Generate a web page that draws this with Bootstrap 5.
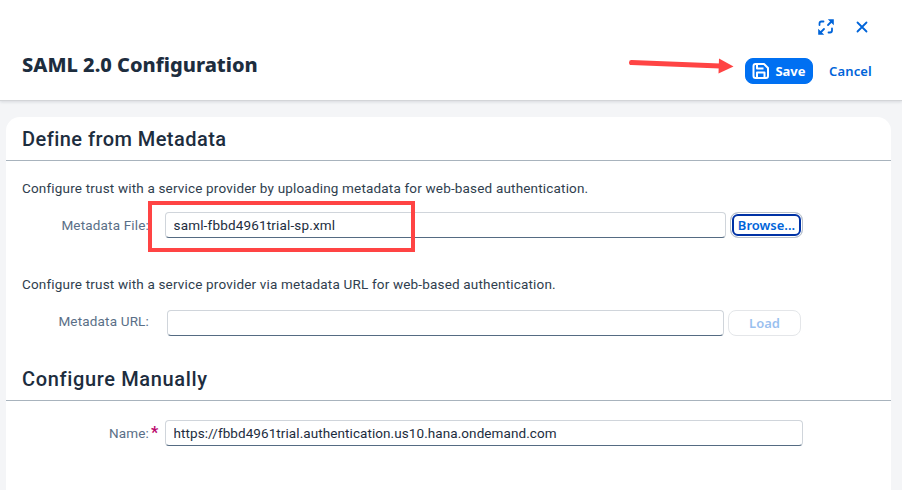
<!DOCTYPE html>
<html lang="en">
<head>
<meta charset="utf-8">
<meta name="viewport" content="width=device-width, initial-scale=1">
<title>SAML 2.0 Configuration</title>
<link href="https://cdn.jsdelivr.net/npm/bootstrap@5.3.0/dist/css/bootstrap.min.css" rel="stylesheet">
<style>
body{background:#f4f5f7;color:#1d2d3e;font-family:Roboto,"Noto Sans",sans-serif;font-size:13.5px;line-height:20px;height:490px}
.page-head{height:101px;border-bottom:1px solid #d3d5d8;box-shadow:0 1px 3px rgba(34,53,72,.14);padding:13px 14px 0 22px}
.head-icons{height:28px;gap:21px;padding-right:20px}
.page-title{font-family:"Noto Sans",sans-serif;font-size:20px;line-height:26px;font-weight:800}
.head-row{height:28px;margin-top:16px}
.btn-ui{--bs-btn-padding-x:0;--bs-btn-padding-y:0;--bs-btn-font-family:"Noto Sans",sans-serif;--bs-btn-font-size:13px;--bs-btn-font-weight:600;--bs-btn-border-radius:8px;--bs-btn-line-height:24px;--bs-btn-disabled-opacity:.4;height:26px}
.btn-save{--bs-btn-bg:#0070f2;--bs-btn-border-color:#0070f2;--bs-btn-font-weight:700;width:68px;gap:5px}
.btn-cancel{--bs-btn-color:#0064d9;width:75px;letter-spacing:.15px}
.btn-browse{--bs-btn-color:#0064d9;--bs-btn-border-color:#bcc3ca;width:73px;box-shadow:inset 0 0 0 1px #fff,inset 0 0 0 3px #0032a5}
.btn-load{--bs-btn-disabled-color:#0064d9;--bs-btn-disabled-border-color:#bcc3ca;width:73px}
.panel{margin:16px 11px 0 6px;height:373px;border-radius:14px 14px 0 0}
.sec-title{height:44px;padding:0 16px;font-size:20px;line-height:44px;font-weight:500;letter-spacing:.45px;border-bottom:1px solid #a8b3bd}
.intro{padding-left:16px;height:20px;color:#2f3e4e;letter-spacing:.178px}
.field-row{padding-right:88px}
.field-label{width:143px;margin-bottom:0;color:#5a6f87;text-align:right;flex:none;letter-spacing:.17px}
.field-box{height:26px;min-height:0;padding:0 7.5px;font-size:13.5px;line-height:24px;color:#1d2d3e;border:1px solid #d0d5db;border-bottom-color:#556b82;border-radius:4px;letter-spacing:.17px}
.field-box,.field-box:focus{box-shadow:none}
.req{color:#ba066c;font-weight:700;flex:0 0 16px;padding-left:2px;font-size:16px}
.i1{margin-top:17px}.r1{margin-top:14px}.i2{margin-top:36px}.r2{margin-top:16px;padding-right:90px}
.l2{padding-bottom:4px}
.f1{margin:0 4px 0 16px}.f2{margin:0 4px 0 18px}.f3{letter-spacing:.08px}
.s2{margin-top:21px;letter-spacing:.65px}.r3{margin-top:19px}
.mark-arrow{left:625px;top:50px}
.mark-box{left:148px;top:201px;width:267px;height:51px;border:4px solid #ff4444}
</style>
<script src="https://cdn.jsdelivr.net/npm/bootstrap@5.3.0/dist/js/bootstrap.bundle.min.js"></script>
</head>
<body class="position-relative overflow-hidden">
<header class="page-head bg-white">
  <div class="head-icons d-flex justify-content-end align-items-center">
    <svg width="18" height="18" viewBox="0 0 18 18" fill="none" stroke="#0064d9" stroke-width="1.8" stroke-linejoin="round" stroke-linecap="round"><path d="M2.500 7V5.500Q2.500 3.500 4.500 3.500H6.500M15 10.500V12.500Q15 14.500 13 14.500H11.500M11 7L14.5 3.5M7 11L3.5 14.5"/><path d="M10.800 1.200H16.800V7.200ZM1.200 10.800V16.800H7.200Z" fill="#0064d9" stroke="none"/></svg>
    <svg width="12" height="12" viewBox="0 0 12 12" fill="none" stroke="#0064d9" stroke-width="1.8" stroke-linecap="round"><path d="M1.5 1.5L10.5 10.5M10.5 1.5L1.5 10.5"/></svg>
  </div>
  <div class="head-row d-flex align-items-center">
    <h1 class="page-title me-auto mb-2 pb-1">SAML 2.0 Configuration</h1>
    <button type="button" class="btn btn-primary btn-ui btn-save d-flex align-items-center justify-content-center"><svg width="18" height="18" viewBox="0 0 18 18" fill="none" stroke="#fff" stroke-width="2" stroke-linejoin="round"><path d="M1.500 4Q1.500 2 3.500 2H12L16 6V14Q16 16 14 16H3.500Q1.500 16 1.500 14Z"/><path d="M5 2V6.500H11.500M5 16V10.500H12.500V16"/></svg><span>Save</span></button>
    <button type="button" class="btn btn-ui btn-cancel">Cancel</button>
  </div>
</header>
<main class="panel bg-white">
  <h2 class="sec-title mb-0">Define from Metadata</h2>
  <p class="intro i1 mb-0">Configure trust with a service provider by uploading metadata for web-based authentication.</p>
  <div class="field-row r1 d-flex align-items-center">
    <label class="field-label" for="mfile">Metadata File:</label>
    <input id="mfile" class="form-control field-box f1" value="saml-fbbd4961trial-sp.xml">
    <button type="button" class="btn btn-ui btn-browse flex-shrink-0">Browse...</button>
  </div>
  <p class="intro i2 mb-0">Configure trust with a service provider via metadata URL for web-based authentication.</p>
  <div class="field-row r2 d-flex align-items-center">
    <label class="field-label l2" for="murl">Metadata URL:</label>
    <input id="murl" class="form-control field-box f2">
    <button type="button" class="btn btn-ui btn-load flex-shrink-0" disabled>Load</button>
  </div>
  <h2 class="sec-title s2 mb-0">Configure Manually</h2>
  <div class="field-row r3 d-flex align-items-center">
    <label class="field-label" for="mname">Name:</label><span class="req">*</span>
    <input id="mname" class="form-control field-box f3" value="https://fbbd4961trial.authentication.us10.hana.ondemand.com">
  </div>
</main>
<svg class="mark-arrow position-absolute" width="112" height="30" viewBox="0 0 112 30"><path d="M6.5 12.5L95 16" stroke="#ff4444" stroke-width="5" stroke-linecap="round"/><path d="M94 8.5L108.500 16.500L93.500 23.500Z" fill="#ff4444"/></svg>
<div class="mark-box position-absolute"></div>
</body>
</html>
